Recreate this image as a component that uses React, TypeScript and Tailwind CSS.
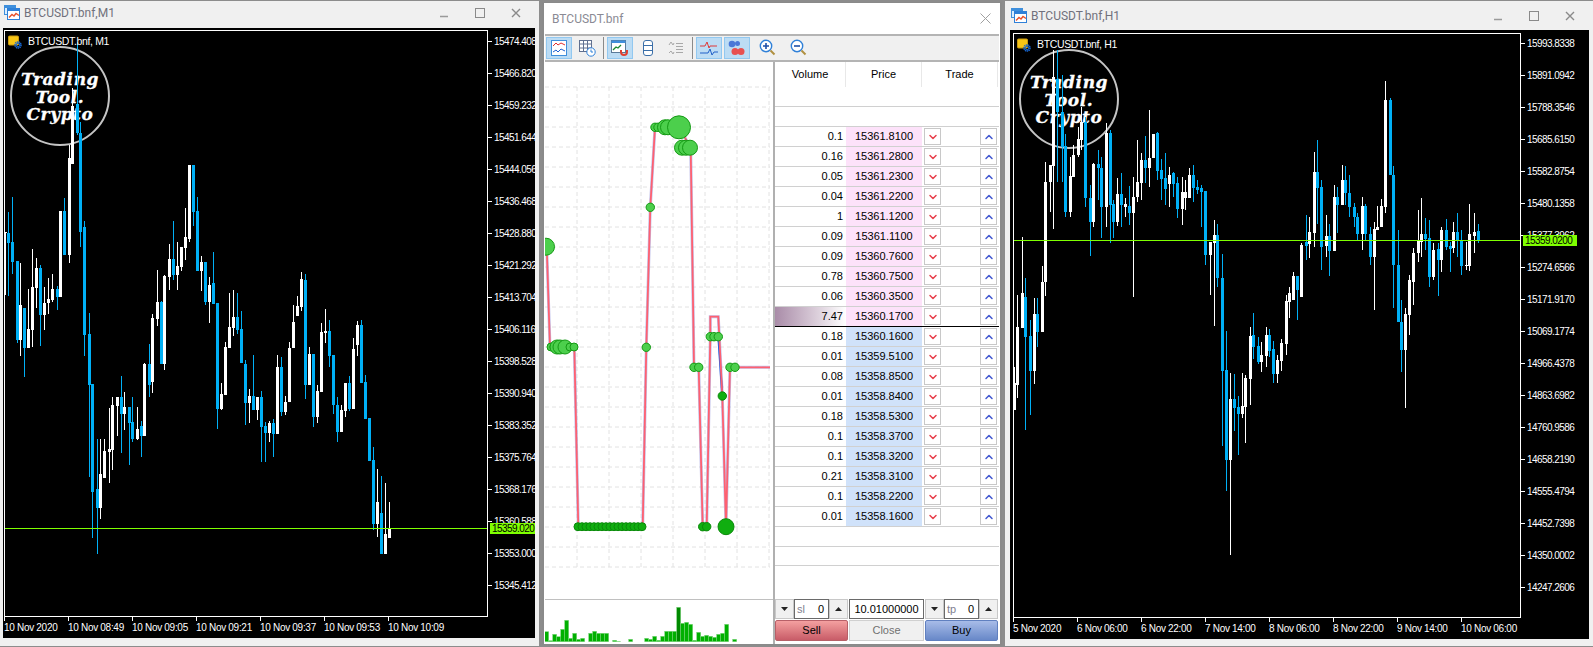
import React from 'react';
import { ChevronDown, ChevronUp } from 'lucide-react';

// [x, wickTop, bodyTop, bodyBottom, wickBottom, blue?]
type Candle = [number, number, number, number, number, number];

const m1Candles: Candle[] = [
    [14, 245, 245, 247, 435, 0], [24, 185, 250, 278, 437, 1], [36, 140, 276, 335, 372, 1], [48, 333, 333, 570, 578, 1],
    [59, 340, 465, 570, 617, 0], [71, 475, 475, 593, 680, 1], [82, 417, 537, 593, 593, 0], [94, 297, 411, 539, 590, 0],
    [105, 325, 354, 413, 474, 0], [117, 345, 354, 495, 587, 1], [129, 411, 459, 495, 540, 0], [140, 385, 447, 460, 491, 0],
    [152, 372, 417, 450, 457, 0], [164, 408, 417, 441, 480, 1], [175, 183, 183, 441, 441, 0], [187, 144, 183, 315, 315, 1],
    [199, -15, 25, 315, 339, 0], [210, -185, -132, 42, 42, 0], [222, -323, -138, -50, -45, 1], [233, -85, -50, 246, 292, 1],
    [245, 213, 231, 555, 618, 1], [257, 490, 552, 705, 980, 1], [268, 702, 702, 1026, 1164, 1], [280, 867, 1017, 1074, 1212, 1],
    [291, 867, 972, 1074, 1107, 0], [303, 867, 903, 983, 985, 0], [315, 774, 897, 906, 998, 0], [326, 741, 765, 900, 960, 0],
    [338, 741, 741, 768, 858, 0], [350, 678, 741, 792, 908, 1], [361, 726, 771, 792, 840, 0], [373, 771, 771, 820, 945, 1],
    [384, 741, 816, 867, 875, 1], [396, 771, 837, 867, 870, 0], [408, 813, 828, 858, 920, 1], [419, 640, 642, 858, 858, 0],
    [431, 582, 642, 705, 740, 1], [442, 492, 504, 696, 728, 0], [454, 360, 456, 507, 528, 0], [466, 453, 456, 642, 642, 1],
    [477, 375, 378, 642, 660, 0], [489, 282, 327, 381, 420, 0], [501, 213, 327, 375, 390, 1], [512, 276, 348, 375, 420, 0],
    [524, 291, 291, 351, 363, 0], [536, 174, 261, 294, 330, 0], [547, 45, 45, 267, 276, 0], [559, 45, 45, 186, 228, 1],
    [570, 141, 183, 363, 363, 1], [582, 318, 336, 363, 423, 0], [594, 336, 336, 456, 466, 1], [605, 380, 405, 456, 519, 0],
    [617, 306, 399, 462, 462, 1], [628, 459, 459, 777, 837, 1], [640, 699, 732, 777, 780, 0], [652, 576, 591, 735, 735, 0],
    [663, 430, 531, 594, 594, 0], [675, 420, 501, 534, 558, 0], [687, 429, 501, 540, 552, 1], [698, 483, 537, 639, 639, 1],
    [710, 630, 642, 759, 825, 1], [722, 717, 738, 759, 820, 0], [733, 615, 738, 780, 780, 1], [745, 741, 741, 780, 810, 0],
    [756, 723, 741, 831, 936, 1], [768, 816, 828, 849, 936, 1], [780, 813, 819, 849, 876, 0], [791, 807, 819, 852, 921, 1],
    [803, 615, 651, 852, 852, 0], [815, 621, 651, 786, 798, 1], [826, 738, 756, 786, 795, 0], [838, 576, 594, 756, 756, 0],
    [850, 465, 516, 594, 594, 0], [861, 438, 468, 498, 498, 0], [873, 366, 387, 471, 483, 0], [885, 372, 390, 705, 747, 1],
    [896, 591, 612, 705, 705, 0], [908, 612, 612, 801, 831, 1], [919, 705, 723, 801, 819, 0], [931, 519, 546, 726, 726, 0],
    [942, 477, 543, 549, 579, 0], [954, 510, 543, 618, 651, 1], [966, 615, 615, 765, 792, 1], [977, 741, 765, 846, 876, 1],
    [989, 765, 780, 846, 846, 0], [1001, 699, 699, 783, 801, 0], [1012, 678, 699, 777, 783, 1], [1024, 564, 597, 777, 777, 0],
    [1036, 513, 525, 585, 618, 0], [1047, 510, 525, 699, 699, 1], [1059, 675, 696, 807, 807, 1], [1070, 804, 804, 933, 933, 1],
    [1082, 891, 930, 1121, 1140, 1], [1093, 957, 1056, 1121, 1160, 0], [1105, 978, 1089, 1212, 1212, 1], [1116, 999, 1152, 1212, 1212, 0],
    [1128, 1056, 1134, 1164, 1164, 0],
];

const h1Candles: Candle[] = [
    [36, 1100, 1150, 1230, 1230, 0], [46, 885, 980, 1155, 1195, 0], [57, 712, 880, 985, 985, 0], [67, 835, 890, 1010, 1290, 1],
    [78, 960, 1008, 1113, 1245, 1], [89, 895, 942, 1113, 1152, 0], [99, 895, 942, 996, 1040, 1], [110, 798, 845, 996, 996, 0],
    [120, 485, 545, 845, 888, 0], [131, 495, 495, 545, 635, 0], [141, 150, 230, 497, 686, 0], [152, 150, 238, 335, 545, 1],
    [163, 225, 335, 440, 545, 1], [173, 403, 437, 635, 650, 1], [184, 470, 528, 635, 650, 0], [194, 435, 465, 530, 530, 0],
    [205, 380, 418, 465, 470, 0], [215, 320, 365, 420, 450, 0], [226, 350, 365, 593, 620, 1], [237, 555, 593, 665, 767, 1],
    [247, 490, 492, 665, 680, 0], [258, 450, 492, 505, 600, 1], [268, 470, 505, 620, 715, 1], [279, 370, 400, 620, 680, 0],
    [290, 390, 400, 615, 728, 1], [300, 600, 612, 665, 715, 1], [310, 535, 582, 665, 678, 0], [321, 520, 582, 615, 680, 1],
    [331, 595, 612, 622, 650, 0], [342, 558, 618, 640, 675, 1], [352, 530, 592, 638, 890, 0], [363, 420, 545, 592, 605, 0],
    [374, 460, 480, 548, 600, 0], [384, 408, 480, 505, 550, 1], [395, 330, 475, 505, 560, 0], [405, 402, 402, 475, 475, 0],
    [416, 395, 400, 513, 540, 1], [427, 478, 510, 538, 600, 1], [437, 460, 535, 568, 615, 1], [448, 500, 525, 552, 620, 0],
    [458, 515, 520, 552, 590, 1], [469, 530, 548, 628, 655, 1], [480, 530, 575, 628, 675, 0], [490, 540, 575, 593, 630, 0],
    [501, 505, 525, 593, 593, 0], [511, 495, 525, 565, 605, 1], [522, 540, 560, 570, 582, 1], [532, 555, 565, 575, 680, 1],
    [543, 573, 573, 765, 795, 1], [554, 725, 725, 765, 885, 0], [565, 660, 705, 730, 978, 0], [575, 672, 705, 835, 860, 1],
    [586, 762, 835, 1113, 1338, 1], [597, 993, 1110, 1380, 1473, 1], [607, 1120, 1197, 1380, 1665, 0], [618, 1122, 1197, 1225, 1292, 1],
    [628, 1188, 1221, 1242, 1365, 1], [639, 1118, 1218, 1242, 1255, 0], [649, 1125, 1135, 1220, 1330, 0], [660, 982, 1008, 1137, 1215, 0],
    [670, 940, 1005, 1040, 1078, 1], [681, 1010, 1038, 1086, 1092, 1], [691, 1025, 1065, 1086, 1115, 0], [702, 982, 1005, 1068, 1100, 0],
    [712, 988, 1005, 1053, 1070, 1], [723, 1023, 1047, 1122, 1150, 1], [733, 1065, 1080, 1122, 1150, 0], [744, 1017, 1030, 1083, 1112, 0],
    [755, 885, 903, 1032, 1065, 0], [765, 860, 880, 905, 955, 0], [776, 815, 828, 900, 900, 0], [786, 830, 828, 870, 960, 1],
    [797, 730, 735, 890, 890, 0], [808, 645, 725, 738, 780, 1], [818, 650, 695, 732, 775, 0], [829, 455, 517, 698, 740, 0],
    [839, 420, 517, 565, 672, 1], [850, 540, 562, 740, 810, 1], [861, 645, 708, 738, 772, 0], [871, 672, 708, 752, 828, 1],
    [882, 555, 592, 752, 752, 0], [892, 560, 592, 615, 700, 1], [903, 495, 540, 615, 615, 0], [913, 498, 540, 580, 615, 1],
    [924, 525, 580, 620, 650, 1], [935, 608, 622, 652, 680, 1], [945, 640, 652, 702, 720, 1], [956, 592, 618, 702, 750, 0],
    [966, 612, 618, 702, 720, 1], [977, 680, 702, 770, 795, 1], [988, 665, 688, 770, 930, 0], [998, 618, 680, 690, 690, 0],
    [1008, 598, 618, 680, 680, 0], [1019, 242, 300, 620, 640, 0], [1030, 295, 300, 525, 525, 1], [1040, 498, 525, 795, 925, 1],
    [1051, 690, 795, 965, 965, 1], [1061, 900, 966, 1050, 1115, 1], [1072, 925, 942, 1050, 1223, 0], [1082, 825, 840, 945, 1005, 0],
    [1093, 745, 758, 845, 915, 0], [1104, 630, 722, 760, 785, 0], [1114, 595, 702, 725, 770, 0], [1125, 655, 702, 718, 750, 1],
    [1135, 660, 715, 830, 860, 1], [1146, 730, 750, 832, 840, 0], [1157, 730, 748, 780, 888, 1], [1167, 682, 690, 780, 815, 0],
    [1178, 658, 690, 742, 750, 1], [1189, 725, 738, 748, 815, 1], [1199, 665, 695, 745, 760, 0], [1209, 638, 695, 722, 770, 1],
    [1220, 690, 720, 798, 825, 1], [1231, 725, 795, 798, 810, 0], [1241, 612, 702, 798, 812, 0], [1252, 640, 695, 707, 760, 0],
    [1263, 672, 692, 722, 730, 1],
];

const m1Prices = ['15474.408', '15466.820', '15459.232', '15451.644', '15444.056', '15436.468', '15428.880', '15421.292', '15413.704', '15406.116', '15398.528', '15390.940', '15383.352', '15375.764', '15368.176', '15360.588', '15353.000', '15345.412'];
const h1Prices = ['15993.8338', '15891.0942', '15788.3546', '15685.6150', '15582.8754', '15480.1358', '15377.3962', '15274.6566', '15171.9170', '15069.1774', '14966.4378', '14863.6982', '14760.9586', '14658.2190', '14555.4794', '14452.7398', '14350.0002', '14247.2606'];
const m1Times = ['10 Nov 2020', '10 Nov 08:49', '10 Nov 09:05', '10 Nov 09:21', '10 Nov 09:37', '10 Nov 09:53', '10 Nov 10:09'];
const h1Times = ['5 Nov 2020', '6 Nov 06:00', '6 Nov 22:00', '7 Nov 14:00', '8 Nov 06:00', '8 Nov 22:00', '9 Nov 14:00', '10 Nov 06:00'];

const depth: [string, string][] = [
    ['0.1', '15361.8100'], ['0.16', '15361.2800'], ['0.05', '15361.2300'], ['0.04', '15361.2200'], ['1', '15361.1200'],
    ['0.09', '15361.1100'], ['0.09', '15360.7600'], ['0.78', '15360.7500'], ['0.06', '15360.3500'], ['7.47', '15360.1700'],
    ['0.18', '15360.1600'], ['0.01', '15359.5100'], ['0.08', '15358.8500'], ['0.01', '15358.8400'], ['0.18', '15358.5300'],
    ['0.1', '15358.3700'], ['0.1', '15358.3200'], ['0.21', '15358.3100'], ['0.1', '15358.2200'], ['0.01', '15358.1600'],
];

const volumeBars: [number, number][] = [
    [14, 695], [26, 722], [38, 703], [50, 710], [62, 688], [74, 661], [86, 715], [98, 700], [110, 718], [122, 715], [146, 700], [158, 694], [170, 700], [182, 700], [194, 700],
    [218, 721], [230, 724], [266, 718], [314, 715], [326, 718], [338, 709], [350, 721], [362, 709], [374, 694], [386, 694], [398, 694], [410, 622], [422, 670], [434, 667], [446, 673],
    [458, 721], [470, 697], [482, 709], [494, 706], [506, 709], [518, 712], [530, 703], [542, 700], [554, 673], [578, 718],
];

const gridX = [577, 609, 641, 673, 705, 737, 769];
const gridY = [87, 107, 127, 147, 167, 187, 207, 227, 247, 267, 287, 307, 327, 347, 367, 387, 407, 427, 447, 467, 487, 507, 527, 547, 567];

const lowerRow = Array.from({ length: 17 }, (_, i) => 578 + i * 4);

const WindowIcon = () => (
    <svg width="16" height="15" viewBox="0 0 16 15" className="shrink-0">
        <rect x="0.5" y="0.5" width="11" height="9" fill="#dbeeff" stroke="#3f8fdc" />
        <rect x="0.5" y="0.5" width="11" height="2.5" fill="#3f8fdc" />
        <rect x="3.5" y="3.5" width="12" height="11" fill="#fff" stroke="#2f80d8" />
        <rect x="3.5" y="3.5" width="12" height="2.5" fill="#2f80d8" />
        <path d="M5 12.5l3-3 2 1.5 2-2.5 3 2" fill="none" stroke="#e8502a" strokeWidth="1.4" />
    </svg>
);

const FolderGear = () => (
    <svg width="14" height="14" viewBox="0 0 14 14">
        <rect x="0.5" y="1" width="10" height="9" rx="1" fill="#f7c515" stroke="#c89a10" />
        <circle cx="10" cy="10" r="3" fill="none" stroke="#1565d0" strokeWidth="1.6" strokeDasharray="1.3 0.5" />
        <circle cx="10" cy="10" r="1.8" fill="none" stroke="#1565d0" />
    </svg>
);

const WindowButtons = () => (
    <div className="ml-auto flex items-center gap-[26px] pr-[14px]">
        <svg width="10" height="10" viewBox="0 0 10 10"><path d="M1 8.5h8" stroke="#9a9a9a" strokeWidth="1.5" /></svg>
        <svg width="10" height="10" viewBox="0 0 10 10"><rect x="0.5" y="0.5" width="9" height="9" fill="none" stroke="#8a8a8a" /></svg>
        <svg width="10" height="10" viewBox="0 0 10 10"><path d="M1 1l8 8M9 1l-8 8" stroke="#8a8a8a" strokeWidth="1.4" /></svg>
    </div>
);

const Logo = ({ className }: { className: string }) => (
    <div className={`absolute flex h-[100px] w-[100px] flex-col items-center justify-center rounded-full border-2 border-[#c4c4c4] pt-[3px] font-['DejaVu_Serif',serif] text-[17px] leading-[17.5px] font-bold tracking-[0.6px] text-white italic [-webkit-text-stroke:0.3px_white] ${className}`}>
        <span>Trading</span>
        <span>Tool.</span>
        <span>Crypto</span>
    </div>
);

interface ChartWindowProps {
    title: string;
    chartTitle: string;
    prices: string[];
    times: string[];
    candles: Candle[];
    tag: string;
    toX: (x: number) => number;
    toY: (y: number) => number;
    plotWidth: number;
    plotHeight: number;
    lineTop: number;
    tagTop: number;
    axisTop: string;
    className: string;
    titleClass: string;
    bodyClass: string;
    logoClass: string;
    tagClass: string;
}

const ChartWindow: React.FC<ChartWindowProps> = ({ title, chartTitle, prices, times, candles, tag, toX, toY, plotWidth, plotHeight, lineTop, tagTop, axisTop, className, titleClass, bodyClass, logoClass, tagClass }) => (
    <div className={`flex flex-col bg-[#f0f0f0] ${className}`}>
        <div className={`-ml-[3px] flex items-center gap-[4px] pl-[4px] font-['Roboto',sans-serif] text-[12px] text-[#70707c] ${titleClass}`}>
            <WindowIcon />
            <span>{title}</span>
            <WindowButtons />
        </div>
        <div className={`flex flex-col bg-black ${bodyClass}`}>
            <div className="flex">
                <div className="relative shrink-0 overflow-hidden border border-white" style={{ width: plotWidth, height: plotHeight }}>
                    <Logo className={logoClass} />
                    <svg className="absolute inset-0" width={plotWidth} height={plotHeight} shapeRendering="crispEdges">
                        {candles.map(([x, wickTop, bodyTop, bodyBottom, wickBottom, blue]) => {
                            const cx = toX(x);
                            const color = blue ? '#00b0f6' : '#ffffff';
                            return (
                                <g key={x} fill={color}>
                                    <rect x={cx} y={toY(wickTop)} width={1} height={toY(wickBottom) - toY(wickTop)} />
                                    <rect x={cx - 1} y={toY(bodyTop)} width={3} height={Math.max(toY(bodyBottom) - toY(bodyTop), 1)} />
                                </g>
                            );
                        })}
                    </svg>
                    <div className="absolute right-0 left-0 h-px bg-[#7fff00]" style={{ top: lineTop }} />
                    <div className="absolute top-[3px] left-[3px] flex items-center gap-[6px] text-[10.5px] tracking-[-0.35px] text-white">
                        <FolderGear />
                        <span>{chartTitle}</span>
                    </div>
                </div>
                <div className={`relative min-w-0 flex-1 overflow-hidden ${axisTop}`}>
                    {prices.map(p => (
                        <div key={p} className="flex h-[32px] items-center text-[10px] tracking-[-0.55px] whitespace-nowrap text-white">
                            <span className="mr-[2px] h-px w-[4px] shrink-0 bg-white" />
                            {p}
                        </div>
                    ))}
                    <div className={`absolute flex h-[11px] items-center bg-[#7fff00] pl-[2px] text-[10px] tracking-[-0.55px] whitespace-nowrap text-black ${tagClass}`} style={{ top: tagTop }}>
                        {tag}
                    </div>
                </div>
            </div>
            <div className="flex h-[21px]">
                {times.map(t => (
                    <div key={t} className="relative h-full w-[64px] shrink-0 pt-[3px] text-[10px] tracking-[-0.3px] whitespace-nowrap text-white">
                        <span className="absolute top-0 left-0 h-[4px] w-px bg-white" />
                        {t}
                    </div>
                ))}
            </div>
        </div>
    </div>
);

const ToolButton = ({ active, children }: { active?: boolean; children: React.ReactNode }) => (
    <div className={`flex h-[22px] w-[26px] items-center justify-center border ${active ? 'border-[#92c8f0] bg-[#bcdcf4]' : 'border-transparent'}`}>
        {children}
    </div>
);

const Toolbar = () => (
    <div className="flex h-[28px] items-center gap-[2px] border-y-2 border-[#b4b4b4] bg-[#f0f0f0] pl-[1px]">
        <ToolButton active>
            <svg width="16" height="16" viewBox="0 0 16 16"><rect x="0.5" y="0.5" width="15" height="15" fill="#fff" stroke="#3f8fdc" /><path d="M2 6l3-3 2 2 3-2 4 2" fill="none" stroke="#e03030" /><path d="M2 12l3-2 2 2 3-3 4 2" fill="none" stroke="#2060d0" /></svg>
        </ToolButton>
        <ToolButton>
            <svg width="17" height="17" viewBox="0 0 17 17"><rect x="0.5" y="0.5" width="12" height="11" fill="#fff" stroke="#607090" /><path d="M0.5 4h12M0.5 8h12M4.5 0.5v11M8.5 0.5v11" stroke="#607090" /><circle cx="12" cy="12" r="4.2" fill="#fff" stroke="#2f80d8" /><path d="M12 9.5V12h2" fill="none" stroke="#2f80d8" /></svg>
        </ToolButton>
        <div className="mx-[1px] h-[22px] w-px bg-[#8a8a8a]" />
        <ToolButton active>
            <svg width="18" height="16" viewBox="0 0 18 16"><rect x="0.5" y="0.5" width="14" height="12" fill="#fff" stroke="#5a7a98" /><rect x="0.5" y="0.5" width="14" height="2.5" fill="#3f8fdc" /><path d="M2 10l3-3 2 1 3-3" fill="none" stroke="#1a8a30" strokeWidth="1.3" /><path d="M9 10v2a4 4 0 0 0 8 0v-2h-2v2a2 2 0 0 1-4 0v-2z" fill="#e04030" /></svg>
        </ToolButton>
        <ToolButton>
            <svg width="12" height="16" viewBox="0 0 12 16"><rect x="1.5" y="0.5" width="9" height="15" rx="2.5" fill="#fff" stroke="#3a6ea8" /><path d="M1.5 5.5h9M1.5 10.5h9" stroke="#3a6ea8" /></svg>
        </ToolButton>
        <ToolButton>
            <svg width="16" height="16" viewBox="0 0 16 16" fill="none" stroke="#a8a8a8"><path d="M1 5l2-3 2 3 1-2M1 13l2-2 2 3 1-2M8 3.5h7M8 6.5h7M8 9.5h7M8 12.5h7" /></svg>
        </ToolButton>
        <div className="mx-[1px] h-[22px] w-px bg-[#8a8a8a]" />
        <ToolButton active>
            <svg width="20" height="16" viewBox="0 0 20 16" fill="none"><path d="M1 6h5l2-4 2 6 1-2h7" stroke="#e03838" /><path d="M1 13h8l2-4 2 6 2-3h4" stroke="#2060c8" /></svg>
        </ToolButton>
        <ToolButton active>
            <svg width="18" height="16" viewBox="0 0 18 16"><circle cx="4" cy="4" r="3.3" fill="#4a78d8" /><circle cx="9.5" cy="3.5" r="2.5" fill="#4a78d8" /><circle cx="7" cy="11.5" r="3.5" fill="#e85050" /><circle cx="13" cy="11.5" r="3.5" fill="#e85050" /></svg>
        </ToolButton>
        <div className="ml-[2px] flex w-[28px] justify-center">
            <svg width="18" height="18" viewBox="0 0 18 18" fill="none"><circle cx="7" cy="7" r="5.7" fill="#fff" stroke="#2f80d8" strokeWidth="1.4" /><path d="M4 7h6M7 4v6" stroke="#1c4fa8" strokeWidth="1.6" /><path d="M11.5 11.5l4 4" stroke="#b09040" strokeWidth="2" /></svg>
        </div>
        <div className="ml-[1px] flex w-[28px] justify-center">
            <svg width="18" height="18" viewBox="0 0 18 18" fill="none"><circle cx="7" cy="7" r="5.7" fill="#fff" stroke="#2f80d8" strokeWidth="1.4" /><path d="M4 7h6" stroke="#1c4fa8" strokeWidth="1.6" /><path d="M11.5 11.5l4 4" stroke="#b09040" strokeWidth="2" /></svg>
        </div>
    </div>
);

const Dot = ({ x, y, r, low }: { x: number; y: number; r: number; low?: boolean }) => (
    <circle cx={x} cy={y} r={r} fill={low ? '#10ae10' : '#4ccf4c'} stroke={low ? '#0a8a0a' : '#149a14'} strokeWidth="1" />
);

const TickChart = () => {
    const redPath = '546.7,246.7 550,347 574.3,347 578.3,526.7 642.7,526.7 646.3,347.3 650.3,207.3 655,127.3 679,127.3 690.7,147.7 694,367.3 698.7,367.3 702.7,526.7 706.7,526.7 710.3,336.7 710.3,316.7 718.3,316.7 722.3,396 726,526.7 730,367.3 770,367.3';
    return (
        <svg className="block" width="228" height="537" viewBox="545 62 228 537">
            {gridX.map(x => <line key={x} x1={x} x2={x} y1={87} y2={567} stroke="#e2e2e2" strokeDasharray="4 3" />)}
            {gridY.map(y => <line key={y} x1={545} x2={770} y1={y} y2={y} stroke="#e2e2e2" strokeDasharray="4 3" />)}
            <polyline points={redPath} fill="none" stroke="#8f8fd8" strokeWidth="3" opacity="0.55" />
            <polyline points="718.3,336.7 722.3,396" fill="none" stroke="#1f5fe0" strokeWidth="2" />
            <polyline points={redPath} fill="none" stroke="#ff6070" strokeWidth="1.8" />
            <Dot x={546} y={246.7} r={8.5} />
            {[551, 554].map(x => <Dot key={x} x={x} y={347} r={4} />)}
            {[557, 560, 565].map(x => <Dot key={x} x={x} y={347} r={7} />)}
            <Dot x={570} y={347} r={4} />
            <Dot x={574} y={347} r={4} />
            <Dot x={646.3} y={347.3} r={4.2} />
            <Dot x={650.3} y={207.3} r={4.2} />
            <Dot x={655} y={127.3} r={4.2} />
            <Dot x={658} y={127.3} r={4.2} />
            <Dot x={665} y={127.3} r={7.5} />
            <Dot x={668} y={127.3} r={7.5} />
            <Dot x={679} y={127.3} r={11.5} />
            {[682, 686, 690].map(x => <Dot key={x} x={x} y={147.7} r={7.5} />)}
            {[694, 698.7].map(x => <Dot key={x} x={x} y={367.3} r={4.2} />)}
            {lowerRow.map(x => <Dot key={x} x={x} y={526.7} r={4} low />)}
            {[702.7, 706.7].map(x => <Dot key={x} x={x} y={526.7} r={4.2} low />)}
            {[710.3, 714, 718.3].map(x => <Dot key={x} x={x} y={336.7} r={4.2} />)}
            <Dot x={722.3} y={396} r={4.2} low />
            <Dot x={726} y={526.7} r={8} low />
            {[730, 735].map(x => <Dot key={x} x={x} y={367.3} r={4.2} />)}
        </svg>
    );
};

const VolumeChart = () => (
    <svg className="block" width="228" height="43" viewBox="0 0 228 43">
        {volumeBars.map(([x, top]) => (
            <rect key={x} x={x / 3 - 5} y={(top - 600) / 3} width={4} height={(725 - top) / 3} fill={top === 622 ? '#008a00' : '#00b000'} stroke="#7fd87f" strokeWidth="0.4" />
        ))}
    </svg>
);

const Triangle = ({ up }: { up?: boolean }) => (
    <svg width="7" height="4" viewBox="0 0 7 4"><path d={up ? 'M3.5 0L7 4H0z' : 'M0 0h7L3.5 4z'} fill="#222" /></svg>
);

const Spinner = ({ label }: { label: string }) => (
    <div className="flex h-[20px] w-[73px] items-stretch">
        <div className="flex w-[19px] items-center justify-center border border-[#c8c8c8] bg-[#f0f0f0]"><Triangle /></div>
        <div className="flex w-[35px] items-center justify-between border border-[#6a6a6a] bg-white px-[2px]">
            <span className="text-[#808090]">{label}</span>
            <span className="pr-[2px] text-black">0</span>
        </div>
        <div className="flex w-[19px] items-center justify-center border border-[#c8c8c8] bg-[#f0f0f0]"><Triangle up /></div>
    </div>
);

const DepthPanel = () => (
    <div className="flex w-[226px] flex-col border-l-2 border-[#b0b0b0] bg-white font-['Liberation_Sans',sans-serif] text-[11px] text-black">
        <div className="grid h-[25px] grid-cols-[71px_76px_76px] text-center leading-[25px]">
            <div className="border-r border-[#e8e8e8]">Volume</div>
            <div className="border-r border-[#e8e8e8]">Price</div>
            <div className="border-r border-[#e8e8e8]">Trade</div>
        </div>
        <div className="h-[20px] border-b border-[#d0d0d0]" />
        <div className="h-[20px] border-b border-[#d0d0d0]" />
        {depth.map(([volume, price], i) => (
            <div key={price} className={`grid h-[20px] grid-cols-[71px_76px_76px] border-b ${i === 9 ? 'border-black' : 'border-[#d0d0d0]'}`}>
                <div className={`pr-[3px] text-right leading-[19px] ${i === 9 ? 'bg-gradient-to-r from-[#a98ca8] to-white' : ''}`}>{volume}</div>
                <div className={`text-center leading-[19px] ${i < 10 ? 'bg-[#fde2fa]' : 'bg-[#d0e2fa]'}`}>{price}</div>
                <div className="flex items-center justify-between pr-[1px] pl-[2px]">
                    <div className="flex h-[17px] w-[17px] items-center justify-center border border-[#c8c8c8] text-[#e8404c]"><ChevronDown size={12} strokeWidth={3} /></div>
                    <div className="flex h-[17px] w-[17px] items-center justify-center border border-[#c8c8c8] text-[#4258d0]"><ChevronUp size={12} strokeWidth={3} /></div>
                </div>
            </div>
        ))}
        <div className="h-[20px] border-b border-[#d0d0d0]" />
        <div className="h-[19px] border-b border-[#d0d0d0]" />
        <div className="h-[33px]" />
        <div className="flex gap-[1px]">
            <Spinner label="sl" />
            <div className="flex h-[20px] w-[75px] items-center justify-center border border-[#6a6a6a] bg-white">10.01000000</div>
            <Spinner label="tp" />
        </div>
        <div className="mt-[1px] flex gap-[1px]">
            <div className="flex h-[21px] w-[73px] items-center justify-center rounded-[2px] border border-[#b86068] bg-gradient-to-b from-[#f4a0a0] to-[#c85c68]">Sell</div>
            <div className="flex h-[21px] w-[75px] items-center justify-center border border-[#d0d0d0] bg-[#f0f0f0] text-[#707070]">Close</div>
            <div className="flex h-[21px] w-[73px] items-center justify-center rounded-[2px] border border-[#6080c0] bg-gradient-to-b from-[#a8bce8] to-[#6888c8]">Buy</div>
        </div>
    </div>
);

const App: React.FC = () => (
    <div className="flex h-[647px] w-[1593px] items-start overflow-hidden bg-[#8c8c8c] font-['Liberation_Sans',sans-serif]">
        <ChartWindow
            title="BTCUSDT.bnf,M1"
            chartTitle="BTCUSDT.bnf, M1"
            prices={m1Prices}
            times={m1Times}
            candles={m1Candles}
            tag="15359.020"
            toX={x => Math.round(x / 2.9) - 5}
            toY={v => Math.round(150 + v / 3) - 31}
            plotWidth={484}
            plotHeight={587}
            lineTop={497}
            tagTop={498}
            axisTop="-mt-[5px]"
            className="mt-[1px] h-[645px] w-[539px] pl-[3px] pr-[4px] pb-[6px]"
            titleClass="h-[27px] pb-[4px]"
            bodyClass="h-[610px] pt-[2px] pl-[1px]"
            logoClass="top-[15px] left-[5px]"
            tagClass="right-0 left-[2px]"
        />
        <div className="mt-[2px] ml-[3px] flex h-[643px] w-[460px] flex-col border-x-2 border-y border-[#8a8a8a] bg-white">
            <div className="flex h-[31px] shrink-0 items-center justify-between px-[8px] font-['Roboto',sans-serif] text-[12px] text-[#8a8a94]">
                <span>BTCUSDT.bnf</span>
                <svg className="mr-[1px]" width="11" height="11" viewBox="0 0 11 11"><path d="M0.5 0.5l10 10M10.5 0.5l-10 10" stroke="#a0a0a0" /></svg>
            </div>
            <div className="mx-[1px]"><Toolbar /></div>
            <div className="mx-[1px] flex min-h-0 flex-1 bg-white">
                <div className="flex w-[228px] flex-col">
                    <TickChart />
                    <div className="h-px bg-[#c0c0c0]" />
                    <VolumeChart />
                </div>
                <DepthPanel />
            </div>
        </div>
        <ChartWindow
            title="BTCUSDT.bnf,H1"
            chartTitle="BTCUSDT.bnf, H1"
            prices={h1Prices}
            times={h1Times}
            candles={h1Candles}
            tag="15359.0200"
            toX={x => Math.round(x / 2.644) - 14}
            toY={v => Math.round(v / 3) - 34}
            plotWidth={508}
            plotHeight={585}
            lineTop={206}
            tagTop={208}
            axisTop="-mt-[6px]"
            className="mt-[1px] ml-[3px] h-[645px] w-[588px] pl-[5px] pr-[4px]"
            titleClass="h-[29px]"
            bodyClass="h-[609px] pt-[3px] pl-[3px]"
            logoClass="top-[15px] left-[5px]"
            tagClass="left-[2px] w-[54px]"
        />
    </div>
);

export default App;
